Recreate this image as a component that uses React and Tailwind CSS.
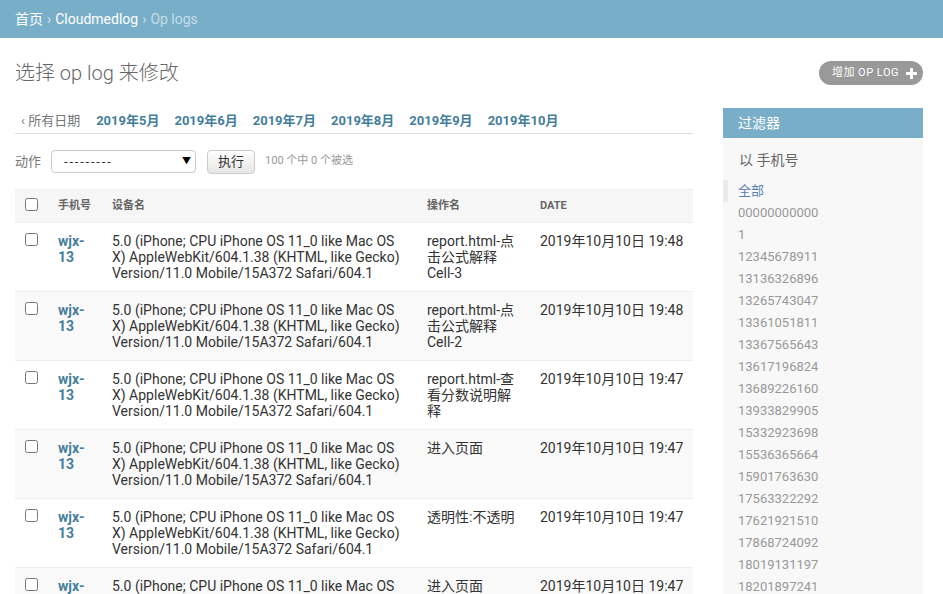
import React from "react"

const UA =
  "5.0 (iPhone; CPU iPhone OS 11_0 like Mac OS X) AppleWebKit/604.1.38 (KHTML, like Gecko) Version/11.0 Mobile/15A372 Safari/604.1"

const rows = [
  { op: "report.html-点击公式解释 Cell-3", date: "2019年10月10日 19:48" },
  { op: "report.html-点击公式解释 Cell-2", date: "2019年10月10日 19:48" },
  { op: "report.html-查看分数说明解释", date: "2019年10月10日 19:47" },
  { op: "进入页面", date: "2019年10月10日 19:47" },
  { op: "透明性:不透明", date: "2019年10月10日 19:47" },
  { op: "进入页面", date: "2019年10月10日 19:47" },
]

const months = ["2019年5月", "2019年6月", "2019年7月", "2019年8月", "2019年9月", "2019年10月"]

const phones = [
  "00000000000",
  "1",
  "12345678911",
  "13136326896",
  "13265743047",
  "13361051811",
  "13367565643",
  "13617196824",
  "13689226160",
  "13933829905",
  "15332923698",
  "15536365664",
  "15901763630",
  "17563322292",
  "17621921510",
  "17868724092",
  "18019131197",
  "18201897241",
  "18217162352",
]

const Checkbox = () => (
  <input type="checkbox" className="w-[13px] h-[13px] m-0 align-top" />
)

const App = () => {
  return (
    <div className="h-[594px] overflow-hidden bg-white font-['Roboto','Noto_Sans_CJK_SC',sans-serif] text-[#333]">
      {/* header */}
      <div className="h-[38px] bg-[#79aec8] px-[15px] flex items-center text-[14px] text-white">
        <span>首页</span>
        <span className="mx-[4px] text-[#cde3ee]">›</span>
        <span>Cloudmedlog</span>
        <span className="mx-[4px] text-[#cde3ee]">›</span>
        <span className="text-[#c4dce8]">Op logs</span>
      </div>

      <div className="pl-[15px] pr-[20px] pt-[23px]">
        <div className="flex items-center justify-between h-[24px]">
          <h1 className="text-[20px] font-light leading-[24px] text-[#666]">选择 op log 来修改</h1>
          <div className="h-[24px] rounded-full bg-[#999] flex items-center pl-[13px] pr-[6px] text-white text-[11px] tracking-[0.5px]">
            <span>增加 OP LOG</span>
            <svg className="ml-[7px]" width="11" height="11" viewBox="0 0 11 11">
              <rect x="4" y="0" width="3" height="11" fill="white" />
              <rect x="0" y="4" width="11" height="3" fill="white" />
            </svg>
          </div>
        </div>

        <div className="flex mt-[23px]">
          {/* main list */}
          <div className="flex-1 min-w-0">
            <div className="flex items-center gap-[15px] pt-[5px] pb-[4px] leading-[16px] text-[13px] border-b border-[#ddd]">
              <span className="pl-[6px] pr-[1px] text-[#777]">‹ 所有日期</span>
              {months.map((m) => (
                <span key={m} className="font-bold text-[#447e9b]">{m}</span>
              ))}
            </div>

            <div className="flex items-center mt-[16px] h-[23px] text-[13px]">
              <span className="text-[#777]">动作</span>
              <div className="ml-[10px] w-[145px] h-[23px] border border-[#ccc] rounded-[4px] flex items-center justify-between pl-[12px] pr-[4px] text-[#333]">
                <span className="tracking-[1.8px]">---------</span>
                <span className="text-[9px] text-black">▼</span>
              </div>
              <div className="ml-[11px] w-[48px] h-[24px] border border-[#ccc] rounded-[4px] bg-gradient-to-b from-white to-[#e6e6e6] flex items-center justify-center text-[13px] text-[#333]">
                执行
              </div>
              <span className="ml-[10px] text-[11px] text-[#999]">100 个中 0 个被选</span>
            </div>

            <table className="mt-[16px] w-full table-fixed border-collapse text-[14px] leading-[16px]">
              <colgroup>
                <col className="w-[35px]" />
                <col className="w-[54px]" />
                <col className="w-[315px]" />
                <col className="w-[113px]" />
                <col />
              </colgroup>
              <thead>
                <tr className="bg-[#f6f6f6] border-y border-[#eee] text-[11px] text-[#666] font-bold uppercase text-left">
                  <th className="pl-[10px] py-[8px] align-middle">
                    <Checkbox />
                  </th>
                  <th className="px-[8px] py-[8px]">手机号</th>
                  <th className="px-[8px] py-[8px]">设备名</th>
                  <th className="px-[8px] py-[8px]">操作名</th>
                  <th className="px-[8px] py-[8px]">DATE</th>
                </tr>
              </thead>
              <tbody>
                {rows.map((r, i) => (
                  <tr key={i} className={`border-b border-[#eee] align-top ${i % 2 ? "bg-[#f9f9f9]" : "bg-white"}`}>
                    <td className="pl-[10px] py-[10px]">
                      <Checkbox />
                    </td>
                    <td className="px-[8px] py-[10px] font-bold text-[#447e9b]">wjx-13</td>
                    <td className="px-[8px] py-[10px]">{UA}</td>
                    <td className="px-[8px] py-[10px]">{r.op}</td>
                    <td className="px-[8px] py-[10px] whitespace-nowrap">{r.date}</td>
                  </tr>
                ))}
              </tbody>
            </table>
          </div>

          {/* filter sidebar */}
          <div className="w-[200px] ml-[30px] bg-[#f8f8f8] shrink-0 min-h-[500px]">
            <h2 className="h-[30px] leading-[30px] bg-[#79aec8] px-[15px] text-[14px] text-white">过滤器</h2>
            <h3 className="mt-[12px] mb-[10px] px-[16px] text-[14px] leading-[20px] text-[#666]">以 手机号</h3>
            <ul className="text-[13px]">
              <li className="h-[22px] leading-[22px] border-l-[5px] border-[#eaeaea] pl-[10px] text-[#5b80b2]">全部</li>
              {phones.map((p) => (
                <li key={p} className="h-[22px] leading-[22px] pl-[15px] text-[#999]">{p}</li>
              ))}
            </ul>
          </div>
        </div>
      </div>
    </div>
  )
}

export default App
